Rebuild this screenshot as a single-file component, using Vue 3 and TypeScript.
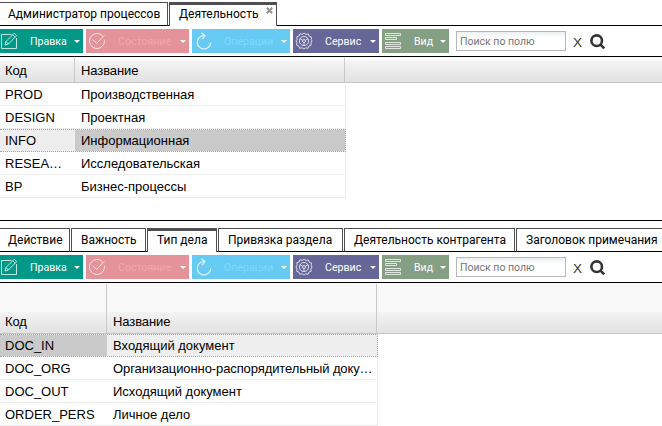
<script setup lang="ts">
import { ref } from 'vue'

// define type section

type Tab = {
  title: string
  width: number
  closable?: boolean
}

type ToolButton = {
  title: string
  kind: string
  width: number
  disabled?: boolean
}

type Row = {
  code: string
  name: string
  long?: boolean
}

type Panel = {
  id: string
  tabs: Tab[]
  activeTab: number
  codeWidth: number
  rows: Row[]
  selectedRow: number
  selectedCell: 'code' | 'name'
}

// define variable section

const buttons: ToolButton[] = [
  { title: 'Правка', kind: 'edit', width: 85 },
  { title: 'Состояние', kind: 'state', width: 103, disabled: true },
  { title: 'Операции', kind: 'operations', width: 98, disabled: true },
  { title: 'Сервис', kind: 'service', width: 86 },
  { title: 'Вид', kind: 'view', width: 67 }
]

const panels = ref<Panel[]>([
  {
    id: 'activity',
    tabs: [
      { title: 'Администратор процессов', width: 170 },
      { title: 'Деятельность', width: 108, closable: true }
    ],
    activeTab: 1,
    codeWidth: 75,
    rows: [
      { code: 'PROD', name: 'Производственная' },
      { code: 'DESIGN', name: 'Проектная' },
      { code: 'INFO', name: 'Информационная' },
      { code: 'RESEA…', name: 'Исследовательская' },
      { code: 'BP', name: 'Бизнес-процессы' }
    ],
    selectedRow: 2,
    selectedCell: 'name'
  },
  {
    id: 'details',
    tabs: [
      { title: 'Действие', width: 72 },
      { title: 'Важность', width: 75 },
      { title: 'Тип дела', width: 70 },
      { title: 'Привязка раздела', width: 125 },
      { title: 'Деятельность контрагента', width: 171 },
      { title: 'Заголовок примечания', width: 160 }
    ],
    activeTab: 2,
    codeWidth: 107,
    rows: [
      { code: 'DOC_IN', name: 'Входящий документ' },
      { code: 'DOC_ORG', name: 'Организационно-распорядительный доку…', long: true },
      { code: 'DOC_OUT', name: 'Исходящий документ' },
      { code: 'ORDER_PERS', name: 'Личное дело' }
    ],
    selectedRow: 0,
    selectedCell: 'code'
  }
])
</script>

<template>
  <div class="page">
    <section v-for="panel in panels" :key="panel.id" class="panel" :class="panel.id">
      <div class="tabs">
        <div
          v-for="(tab, i) in panel.tabs"
          :key="tab.title"
          class="tab"
          :class="{ active: i === panel.activeTab }"
          :style="{ width: tab.width + 'px' }"
          @click="panel.activeTab = i"
        >
          <span>{{ tab.title }}</span>
          <svg v-if="tab.closable" class="close" width="7" height="7" viewBox="0 0 7 7">
            <path d="M.8.8l5.4 5.4M6.2.8L.8 6.2" />
          </svg>
        </div>
      </div>

      <div class="toolbar">
        <div
          v-for="button in buttons"
          :key="button.kind"
          class="button"
          :class="[button.kind, { disabled: button.disabled }]"
          :style="{ width: button.width + 'px' }"
        >
          <svg class="icon" width="18" height="18" viewBox="0 0 18 18">
            <g v-if="button.kind === 'edit'">
              <path d="M11.5 2.5h-10v14h15V6" />
              <path d="M5 13l1-3.5 8.3-8.3 2.4 2.4L8.4 12zM6 9.5L8.4 12M12.7 2.8l2.4 2.4" />
            </g>
            <g v-else-if="button.kind === 'state'">
              <path d="M14.6 4A7.5 7.5 0 1 0 16.4 7.8" />
              <path d="M5 7.7l3.6 3.8 7.7-8.2" />
            </g>
            <g v-else-if="button.kind === 'operations'">
              <path d="M11 3.6H9a6.7 6.7 0 1 0 7.7 6.8M7.4.8L11 3.6 8.2 7.2" />
            </g>
            <g v-else-if="button.kind === 'service'">
              <path
                d="M9 1l2 1.4 2.4-.4.9 2.3 2.3.9-.4 2.4L17 9l-1.2 2 .4 2.1-2.3 1-.9 2.2-2.3-.5L9 17l-1.8-1.2-2.5.5-.9-2.3-2.2-.9.4-2.3L1 9l1.2-1.8-.4-2.4 2.3-.8.8-2.2 2.4.5z"
              />
              <circle cx="9" cy="9" r="4.6" />
              <circle cx="9" cy="9" r="1.5" />
              <path d="M5 6.8l2.7 1.5M13 6.8l-2.7 1.5M9 10.5v3" />
            </g>
            <g v-else>
              <path d="M1.5 1.5h15v2h-15zM1.5 5.5h11v2h-11zM1.5 10.5h15v2h-15zM1.5 14.5h15v2h-15z" />
            </g>
          </svg>
          <span class="caption">{{ button.title }}</span>
          <span class="arrow"></span>
        </div>
        <input class="search" type="text" placeholder="Поиск по полю" />
        <span class="clear">X</span>
        <svg class="magnifier" width="16" height="16" viewBox="0 0 16 16">
          <circle cx="6.7" cy="6.7" r="5.3" />
          <path d="M9.8 9.8l4.4 4.6" />
        </svg>
      </div>

      <div class="grid_header">
        <div class="head" :style="{ width: panel.codeWidth + 'px' }">Код</div>
        <div class="head head_name">Название</div>
      </div>
      <div class="grid_body">
        <div
          v-for="(row, i) in panel.rows"
          :key="row.code"
          class="row"
          :class="{ selected: i === panel.selectedRow }"
          :style="{ width: panel.codeWidth + 271 + 'px' }"
          @click="panel.selectedRow = i"
        >
          <div
            class="cell"
            :class="{ current: i === panel.selectedRow && panel.selectedCell === 'code' }"
            :style="{ width: panel.codeWidth + 'px' }"
          >{{ row.code }}</div>
          <div
            class="cell cell_name"
            :class="{ current: i === panel.selectedRow && panel.selectedCell === 'name', long: row.long }"
          >{{ row.name }}</div>
        </div>
      </div>
    </section>
  </div>
</template>

<style>
body {
  margin: 0;
  overflow: hidden;
}
</style>

<style scoped>
.page {
  width: 662px;
  height: 426px;
  overflow: hidden;
  background: #fff;
  color: #000;
  font-family: "Liberation Sans", Arial, sans-serif;
  font-size: 13px;
}
.page * {
  box-sizing: border-box;
}
.panel {
  overflow: hidden;
}
.panel.activity {
  height: 221px;
  padding-top: 2px;
  border-bottom: 1px solid #000;
}
.panel.details {
  padding-top: 7px;
}

/* tabs */
.tabs {
  display: flex;
  height: 24px;
  margin-left: -2px;
  background: linear-gradient(#000, #000) left bottom / 100% 1px no-repeat;
}
.tab {
  position: relative;
  flex: none;
  height: 24px;
  padding-left: 9px;
  border: 1px solid #4f4f53;
  border-bottom-color: #000;
  background: #fff;
  font-family: Roboto, sans-serif;
  font-size: 12px;
  line-height: 22px;
  white-space: nowrap;
}
.tab + .tab {
  margin-left: 1px;
}
.tab.active {
  border-top-width: 3px;
  border-bottom: 0;
  line-height: 18px;
}
.close {
  position: absolute;
  top: 2px;
  right: 3px;
}
.close path {
  stroke: #929292;
  stroke-width: 2;
}

/* toolbar */
.toolbar {
  display: flex;
  align-items: flex-start;
  height: 31px;
  margin-left: -2px;
  padding-top: 3px;
  border-bottom: 1px solid #000;
  font-family: Roboto, sans-serif;
  font-size: 10.6px;
}
.button {
  display: flex;
  flex: none;
  align-items: center;
  height: 24px;
  margin-right: 3px;
  padding: 0 3px 0 2px;
  color: #fff;
}
.edit {
  background: #009987;
}
.state {
  background: #e4939b;
}
.operations {
  background: #67caf3;
}
.service {
  background: #666699;
}
.view {
  background: #849f84;
}
.state .caption {
  color: #f5a3ad;
}
.operations .caption {
  color: #7bdbfe;
}
.icon {
  flex: none;
  margin-right: 12px;
}
.icon path,
.icon circle {
  fill: none;
  stroke: #fff;
  stroke-opacity: 0.75;
  stroke-width: 1;
}
.operations .icon path {
  stroke-width: 1.3;
}
.caption {
  flex: 1;
  white-space: nowrap;
}
.arrow {
  border: 3px solid transparent;
  border-top-color: #fff;
  border-bottom: 0;
}
.search {
  width: 110px;
  height: 20px;
  margin: 2px 0 0 4px;
  padding: 0 3px;
  border: 1px solid #b5b8b8;
  border-radius: 0;
  outline: none;
  background: linear-gradient(#eceff0, #fff 6px);
  font-family: Roboto, sans-serif;
  font-size: 10.5px;
}
.search::placeholder {
  color: #757575;
}
.clear {
  width: 9px;
  margin: 6px 8px 0 7px;
  color: #333;
  font-family: "Liberation Sans", Arial, sans-serif;
  font-size: 13.5px;
  line-height: 16px;
}
.magnifier {
  margin-top: 5px;
}
.magnifier circle,
.magnifier path {
  fill: none;
  stroke: #333;
  stroke-width: 2.6;
}

/* grid */
.grid_header {
  display: flex;
  align-items: stretch;
  height: 26px;
  padding-top: 1px;
  border-bottom: 1px solid #c5c5c5;
  background: linear-gradient(#f9f9f9 4px, #f3f3f3 4px, #e2e2e2);
}
.details .grid_header {
  height: 51px;
  background: linear-gradient(#f9f9f9 29px, #f3f3f3 29px, #e2e2e2);
}
.head {
  display: flex;
  flex: none;
  align-items: flex-end;
  padding: 0 5px 4px;
  border-right: 1px solid #c8c8c8;
  line-height: 15px;
  letter-spacing: -0.1px;
}
.head_name {
  width: 270px;
  padding-left: 6px;
}
.row {
  display: flex;
  height: 23px;
  border-right: 1px solid #ececec;
  border-bottom: 1px solid #ececec;
  border-top: 1px solid #fff;
}
.row.selected {
  border: 1px dotted #a5a5a5;
  border-left: 0;
  background: #eee;
}
.cell {
  flex: none;
  overflow: hidden;
  padding-left: 5px;
  line-height: 21px;
  white-space: nowrap;
}
.cell_name {
  flex: 1;
  padding-left: 6px;
}
.cell_name.long {
  letter-spacing: -0.1px;
}
.cell.current {
  background: #cacaca;
}
</style>
